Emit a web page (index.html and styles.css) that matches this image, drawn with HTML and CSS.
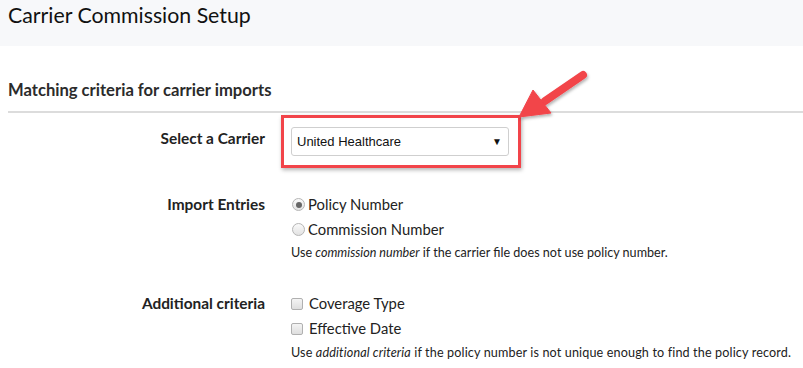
FILE: index.html
```html
<!DOCTYPE html>
<html>
<head>
<meta charset="utf-8">
<link rel="stylesheet" href="styles.css">
</head>
<body>
<header class="page-head">
  <h1 class="page-title">Carrier Commission Setup</h1>
</header>
<section class="panel">
  <h2 class="section-title">Matching criteria for carrier imports</h2>
  <div class="form">
    <div class="row row-carrier">
      <div class="label">Select a Carrier</div>
      <div class="control">
        <div class="select">
          <span class="select-text">United Healthcare</span>
          <span class="caret">▼</span>
        </div>
        <div class="highlight"></div>
      </div>
    </div>
    <div class="row row-import">
      <div class="label">Import Entries</div>
      <div class="control">
        <label class="opt"><span class="radio checked"></span>Policy Number</label>
        <label class="opt"><span class="radio"></span>Commission Number</label>
        <p class="help">Use <em>commission number</em> if the carrier file does not use policy number.</p>
      </div>
    </div>
    <div class="row row-additional">
      <div class="label">Additional criteria</div>
      <div class="control">
        <label class="opt"><span class="check"></span>Coverage Type</label>
        <label class="opt"><span class="check"></span>Effective Date</label>
        <p class="help help-wide">Use <em>additional criteria</em> if the policy number is not unique enough to find the policy record.</p>
      </div>
    </div>
  </div>
  <svg class="arrow" width="100" height="70" viewBox="0 0 100 70">
    <defs>
      <filter id="sh" x="-20%" y="-20%" width="140%" height="140%">
        <feDropShadow dx="1" dy="2" stdDeviation="1.5" flood-color="#000" flood-opacity="0.3"/>
      </filter>
    </defs>
    <g filter="url(#sh)" fill="#f2444a" stroke="#f2444a">
      <line x1="73" y1="13" x2="35" y2="39" stroke-width="8" stroke-linecap="round"/>
      <polygon points="9,55 23,28 41,51" stroke-width="1" stroke-linejoin="round"/>
    </g>
  </svg>
</section>
</body>
</html>
```
FILE: styles.css
```css
* { box-sizing: border-box; }
body {
  margin: 0;
  font-family: "Lato", "Open Sans", sans-serif;
  color: #222;
  background: #fff;
  width: 803px;
  height: 368px;
  overflow: hidden;
}
.page-head {
  background: #f7f8fa;
  height: 46px;
  padding: 1px 8px 0;
}
.page-title {
  margin: 0;
  font-size: 21.3px;
  font-weight: 400;
  line-height: 28px;
  color: #111;
}
.panel {
  position: relative;
  padding: 33px 0 0 8px;
}
.section-title {
  margin: 0;
  font-size: 16.6px;
  font-weight: 700;
  line-height: 22px;
  color: #2b2b2b;
  padding-bottom: 10px;
  border-bottom: 2px solid #dcdcdc;
}
.form {
  display: flex;
  flex-direction: column;
}
.row {
  display: grid;
  grid-template-columns: 257px 1fr;
  column-gap: 26px;
}
.label {
  text-align: right;
  font-weight: 700;
  font-size: 15.4px;
  line-height: 20px;
  color: #222;
  margin-top: 2px;
}
.control {
  position: relative;
  display: flex;
  flex-direction: column;
}
.row-carrier { margin-top: 14px; }
.row-carrier .label { margin-top: 1px; }
.select {
  width: 218px;
  height: 29px;
  border: 1px solid #cfcfcf;
  border-radius: 3px;
  background: #fff;
  display: flex;
  align-items: center;
  justify-content: space-between;
  padding: 0 6px 0 5px;
  font-family: "Liberation Sans", Arial, sans-serif;
  font-size: 13px;
  color: #111;
}
.caret { font-size: 10px; color: #111; }
.highlight {
  position: absolute;
  left: -10px;
  top: -12px;
  width: 240px;
  height: 53px;
  border: 3px solid #f2444a;
  box-shadow: 1px 2px 4px rgba(0,0,0,0.3);
}
.row-import { margin-top: 36px; }
.row-additional { margin-top: 30px; }
.opt {
  display: flex;
  align-items: center;
  font-size: 14.8px;
  line-height: 25px;
  height: 25px;
  color: #222;
}
.radio {
  width: 13px;
  height: 13px;
  border-radius: 50%;
  border: 1px solid #b5b5b5;
  background: linear-gradient(#fafafa, #e2e2e2);
  margin: 0 3px 0 1px;
  position: relative;
  flex: none;
}
.radio.checked::after {
  content: "";
  position: absolute;
  left: 2.5px;
  top: 2.5px;
  width: 6px;
  height: 6px;
  border-radius: 50%;
  background: #666;
}
.check {
  width: 12px;
  height: 12px;
  border-radius: 2px;
  border: 1px solid #b0b0b0;
  background: linear-gradient(#f4f4f4, #dedede);
  margin: 0 6px 0 0;
  flex: none;
}
.help {
  margin: 3px 0 0;
  font-size: 12.6px;
  line-height: 16px;
  color: #222;
}
.row-additional .help { margin-top: 4px; }
.help-wide { letter-spacing: 0.14px; }
.arrow {
  position: absolute;
  left: 510px;
  top: 16px;
}
```
